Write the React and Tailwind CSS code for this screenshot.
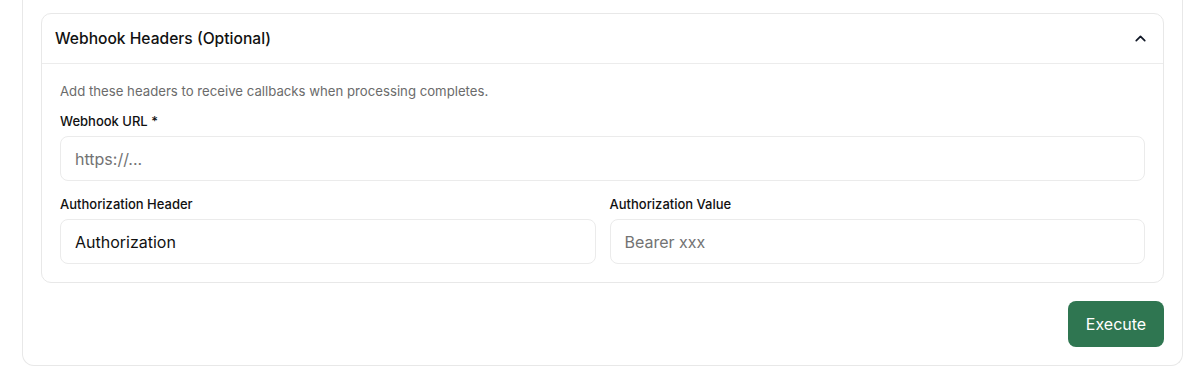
import React from "react";

function ChevronUp() {
  return (
    <svg width="17" height="17" viewBox="0 0 24 24" fill="none" stroke="#111827" strokeWidth="2.4" strokeLinecap="round" strokeLinejoin="round">
      <path d="m18 15-6-6-6 6" />
    </svg>
  );
}

export default function App() {
  return (
    <div className="w-[1200px] h-[381px] bg-white overflow-hidden" style={{ fontFamily: "Inter, 'Noto Sans', sans-serif" }}>
      <div className="ml-[22px] w-[1161px] border border-t-0 border-[#e8e8e8] rounded-b-[12px] px-[18px] pt-[13px] pb-[18px]">
        <div className="border border-[#e8e8e8] rounded-[10px]">
          <div className="h-[50px] flex items-center justify-between pl-[13px] pr-[14px] border-b border-[#ececec]">
            <span className="text-[15.6px] font-medium text-[#111111]">Webhook Headers (Optional)</span>
            <ChevronUp />
          </div>
          <div className="px-[18px] pt-[19px] pb-[18px]">
            <p className="text-[13.2px] leading-[16px] text-[#6b6b6b]">Add these headers to receive callbacks when processing completes.</p>
            <label className="block mt-[14px] text-[13px] leading-[16px] font-medium text-[#111111]">Webhook URL *</label>
            <input
              placeholder="https://..."
              className="mt-[7px] block w-full h-[45px] rounded-[8px] border border-[#ebebeb] px-[14px] text-[16px] text-[#111111] placeholder:text-[#737373] outline-none"
            />
            <div className="mt-[15px] grid grid-cols-2 gap-[14px]">
              <div>
                <label className="block text-[13px] leading-[16px] font-medium text-[#111111]">Authorization Header</label>
                <input
                  defaultValue="Authorization"
                  className="mt-[7px] block w-full h-[45px] rounded-[8px] border border-[#ebebeb] px-[14px] text-[16px] text-[#111111] outline-none"
                />
              </div>
              <div>
                <label className="block text-[13px] leading-[16px] font-medium text-[#111111]">Authorization Value</label>
                <input
                  placeholder="Bearer xxx"
                  className="mt-[7px] block w-full h-[45px] rounded-[8px] border border-[#ebebeb] px-[14px] text-[16px] text-[#111111] placeholder:text-[#737373] outline-none"
                />
              </div>
            </div>
          </div>
        </div>
        <div className="flex justify-end mt-[18px]">
          <button className="h-[46px] w-[96px] rounded-[8px] bg-[#2f7651] text-white text-[16px] font-normal">Execute</button>
        </div>
      </div>
    </div>
  );
}
